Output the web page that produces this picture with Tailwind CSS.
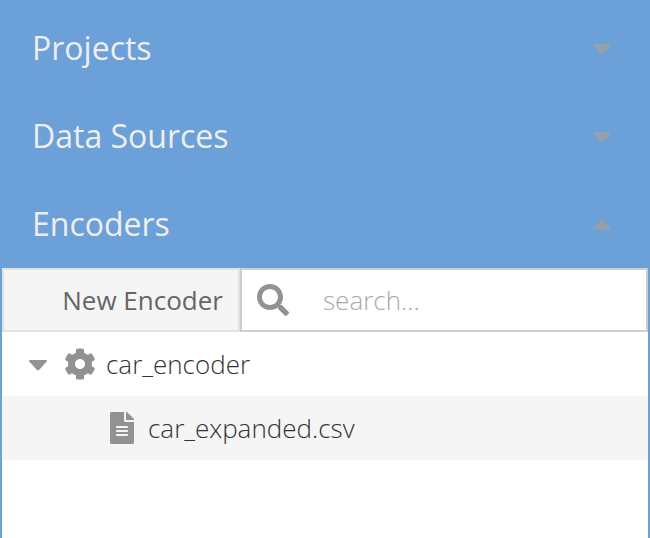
<!DOCTYPE html>
<html lang="en">
<head>
<meta charset="utf-8">
<title>Encoders</title>
<script src="https://cdn.jsdelivr.net/npm/@tailwindcss/browser@4"></script>
</head>
<body class="bg-white font-['Open_Sans','Noto_Sans',sans-serif]">
<aside class="flex h-[538px] w-[650px] flex-col overflow-hidden border-x-2 border-[#6ca0d8] bg-white">
  <nav class="flex h-[268px] shrink-0 flex-col bg-[#6ca0d8] pt-[5px] text-[32px] font-normal text-[#eeeeee]">
    <div class="flex h-[88px] shrink-0 items-center justify-between pr-[37px] pl-[30px]">
      <span class="pb-[2px]">Projects</span>
      <svg class="h-[10px] w-[18px] overflow-visible fill-[#94a0ad]" viewBox="0 0 18 10"><path d="M.8 0H17.200Q18.600.4 17.700 1.600L10.300 9.700Q9 11 7.700 9.700L.3 1.600Q-.6.400.8 0Z"/></svg>
    </div>
    <div class="flex h-[88px] shrink-0 items-center justify-between pr-[37px] pl-[30px]">
      <span class="pb-[2px]">Data Sources</span>
      <svg class="h-[10px] w-[18px] overflow-visible fill-[#94a0ad]" viewBox="0 0 18 10"><path d="M.8 0H17.200Q18.600.4 17.700 1.600L10.300 9.700Q9 11 7.700 9.700L.3 1.600Q-.6.400.8 0Z"/></svg>
    </div>
    <div class="flex h-[88px] shrink-0 items-center justify-between pr-[37px] pl-[30px]">
      <span class="pb-[2px]">Encoders</span>
      <svg class="h-[10px] w-[18px] overflow-visible fill-[#94a0ad]" viewBox="0 0 18 10"><path d="M.8 10H17.200Q18.600 9.600 17.700 8.400L10.300.3Q9-1 7.700.3L.3 8.400Q-.6 9.600.8 10Z"/></svg>
    </div>
  </nav>
  <div class="flex h-16 shrink-0 text-[26px]">
    <button class="flex w-[238px] items-center justify-end border-2 border-[#e2e2e2] bg-[#f5f5f5] pr-[15px] text-[#666666]">New Encoder</button>
    <label class="flex flex-1 items-center border-2 border-[#cecece] bg-white pl-[15px]">
      <svg class="size-8 fill-[#929292]" viewBox="0 0 512 512"><path d="M505 442.700L405.300 343c-4.500-4.500-10.600-7-17-7H372c27.600-35.300 44-79.700 44-128C416 93.100 322.900 0 208 0S0 93.100 0 208s93.100 208 208 208c48.300 0 92.700-16.400 128-44v16.300c0 6.400 2.500 12.500 7 17l99.700 99.700c9.400 9.400 24.600 9.400 33.900 0l28.300-28.300c9.400-9.400 9.400-24.600.1-34zM208 336c-70.700 0-128-57.200-128-128 0-70.700 57.200-128 128-128 70.700 0 128 57.200 128 128 0 70.700-57.200 128-128 128z"/></svg>
      <span class="ml-[34px] font-light text-[#aaaaaa]">search...</span>
    </label>
  </div>
  <div class="flex h-16 shrink-0 items-center pl-[27px] text-[26px] font-light text-[#333333]">
    <svg class="mt-[2px] h-[10px] w-[18px] overflow-visible fill-[#929292]" viewBox="0 0 18 10"><path d="M.8 0H17.200Q18.600.4 17.700 1.600L10.300 9.700Q9 11 7.700 9.700L.3 1.600Q-.6.400.8 0Z"/></svg>
    <svg class="ml-[17px] size-8 fill-[#929292]" viewBox="0 0 512 512"><path d="M487.400 315.700l-42.600-24.600c4.300-23.200 4.300-47 0-70.200l42.600-24.600c4.900-2.800 7.100-8.600 5.500-14-11.100-35.600-30-67.800-54.700-94.600-3.800-4.100-10-5.100-14.800-2.300L380.800 110c-17.900-15.400-38.500-27.300-60.800-35.100V25.800c0-5.600-3.900-10.500-9.400-11.700-36.700-8.200-74.300-7.800-109.200 0-5.500 1.200-9.400 6.100-9.400 11.700V75c-22.200 7.900-42.800 19.800-60.800 35.100L88.700 85.500c-4.900-2.800-11-1.900-14.800 2.300-24.700 26.700-43.600 58.900-54.700 94.600-1.700 5.400.6 11.200 5.500 14L67.300 221c-4.300 23.200-4.300 47 0 70.200l-42.600 24.600c-4.900 2.800-7.100 8.600-5.500 14 11.100 35.600 30 67.800 54.700 94.600 3.800 4.100 10 5.100 14.800 2.300l42.600-24.600c17.900 15.400 38.500 27.300 60.800 35.100v49.200c0 5.600 3.900 10.500 9.400 11.700 36.700 8.200 74.300 7.800 109.200 0 5.500-1.200 9.400-6.100 9.400-11.700v-49.200c22.200-7.900 42.800-19.800 60.800-35.100l42.600 24.600c4.900 2.800 11 1.900 14.800-2.300 24.700-26.700 43.600-58.900 54.700-94.600 1.500-5.500-.7-11.300-5.600-14.100zM256 336c-44.100 0-80-35.900-80-80s35.900-80 80-80 80 35.900 80 80-35.900 80-80 80z"/></svg>
    <span class="ml-[10px]">car_encoder</span>
  </div>
  <div class="flex h-16 shrink-0 items-center bg-[#f5f5f5] pl-[108px] text-[26px] font-light text-[#333333]">
    <svg class="h-8 w-6 fill-[#929292]" viewBox="0 0 384 512"><path d="M224 136V0H24C10.700 0 0 10.700 0 24v464c0 13.300 10.700 24 24 24h336c13.300 0 24-10.700 24-24V160H248c-13.200 0-24-10.800-24-24zm64 236c0 6.600-5.400 12-12 12H108c-6.600 0-12-5.400-12-12v-8c0-6.600 5.400-12 12-12h168c6.600 0 12 5.400 12 12v8zm0-64c0 6.600-5.400 12-12 12H108c-6.600 0-12-5.400-12-12v-8c0-6.600 5.400-12 12-12h168c6.600 0 12 5.400 12 12v8zm0-72v8c0 6.600-5.400 12-12 12H108c-6.600 0-12-5.400-12-12v-8c0-6.600 5.400-12 12-12h168c6.600 0 12 5.400 12 12zm96-114.100v6.100H256V0h6.100c6.400 0 12.500 2.500 17 7l97.900 98c4.500 4.500 7 10.600 7 16.900z"/></svg>
    <span class="ml-[14px]">car_expanded.csv</span>
  </div>
</aside>
</body>
</html>
